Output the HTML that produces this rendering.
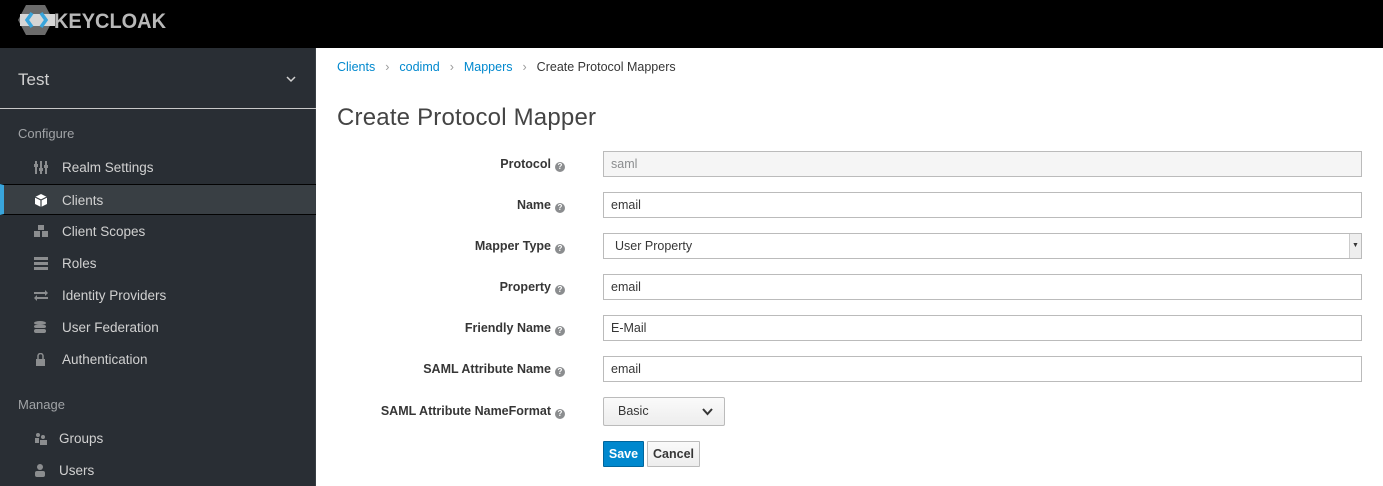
<!DOCTYPE html>
<html><head><style>
*{box-sizing:border-box;margin:0;padding:0}
body{width:1383px;height:486px;overflow:hidden;font-family:"Liberation Sans",sans-serif;background:#fff;position:relative;color:#363636}
.hdr{position:absolute;left:0;top:0;width:1383px;height:48px;background:#000}
.logo{position:absolute;left:18px;top:4px}
.side{position:absolute;left:0;top:48px;width:316px;height:438px;background:#292e34;border-right:1px solid #393f44}
.realm{position:absolute;left:18px;top:70px;color:#d1d1d1;font-size:17px}
.sep{position:absolute;left:0;top:108px;width:316px;height:1px;background:#c8c8c8}
.sec{position:absolute;left:18px;color:#a0a3a6;font-size:13px}
.item{position:absolute;left:0;width:316px;height:31px;color:#d1d1d1;font-size:13.5px;line-height:31px;padding-left:62px}
.item.act{background:#393f44;border-left:4px solid #39a5dc;padding-left:58px;border-top:1px solid #030303;border-bottom:1px solid #030303}
.ic{position:absolute;left:34px;top:9px;width:14px;height:13px}
.bc{position:absolute;left:337px;top:60px;font-size:12.5px;color:#363636}
.bc a{color:#0088ce}
.bc span.s{color:#9c9c9c;margin:0 10px}
h1{position:absolute;left:337px;top:104px;font-weight:normal;font-size:24px;color:#444;letter-spacing:0.2px}
.lbl{position:absolute;right:818px;font-size:12.5px;font-weight:bold;color:#363636;white-space:nowrap}
.q{display:inline-block;width:10px;height:10px;border-radius:50%;background:#8b8d8f;color:#fff;font-size:8px;line-height:10px;text-align:center;margin-left:4px;vertical-align:-1px}
.inp{position:absolute;left:603px;width:759px;height:26px;border:1px solid #bbb;font-size:12.5px;line-height:24px;padding-left:7px;color:#363636;background:#fff}
.sel{position:absolute;left:603px;top:397px;width:122px;height:29px;border:1px solid #bbb;border-radius:2px;background:linear-gradient(#fafafa,#ededed);font-size:12.5px;line-height:27px;padding-left:14px}
.btn{position:absolute;top:441px;height:26px;font-size:12.5px;line-height:24px;text-align:center;border-radius:1px}
</style></head><body>
<div class="hdr">
<svg class="logo" width="160" height="32" viewBox="0 0 160 32">
<polygon points="8,1 27,1 35,16 27,31 8,31 0,16" fill="#6b6b6b"/>
<polygon points="2,10 37,10 37,22 2,22" fill="#d6d6d6"/>
<path d="M14,9 L9,16 L14,23" stroke="#39a5dc" stroke-width="3.5" fill="none"/>
<path d="M23,9 L28,16 L23,23" stroke="#39a5dc" stroke-width="3.5" fill="none"/>
<text x="36" y="24" font-family="Liberation Sans" font-weight="bold" font-size="21" fill="#b8b8b8" textLength="112" lengthAdjust="spacingAndGlyphs">KEYCLOAK</text>
</svg>
</div>
<div class="side"></div>
<div class="realm">Test</div>
<svg style="position:absolute;left:286px;top:76px" width="10" height="7"><path d="M1,1 L5,5 L9,1" stroke="#d1d1d1" stroke-width="1.5" fill="none"/></svg>
<div class="sep"></div>
<div class="sec" style="top:126px">Configure</div>
<div class="item" style="top:152px"><svg class="ic" viewBox="0 0 14 13" fill="#8b8d8f"><rect x="1" y="0" width="2" height="13"/><rect x="6" y="0" width="2" height="13"/><rect x="11" y="0" width="2" height="13"/><rect x="0" y="3" width="4" height="3"/><rect x="5" y="7" width="4" height="3"/><rect x="10" y="4" width="4" height="3"/></svg>Realm Settings</div>
<div class="item act" style="top:184px"><svg class="ic" style="left:30px" viewBox="0 0 14 13"><path d="M7,0 L13,3 L13,10 L7,13 L1,10 L1,3Z" fill="#fff"/><path d="M1,3 L7,6 L13,3 M7,6 V13" stroke="#393f44" stroke-width="1.2" fill="none"/></svg>Clients</div>
<div class="item" style="top:216px"><svg class="ic" viewBox="0 0 14 13" fill="#8b8d8f"><rect x="4" y="0" width="6" height="5"/><rect x="0" y="6" width="6" height="6"/><rect x="8" y="6" width="6" height="6"/></svg>Client Scopes</div>
<div class="item" style="top:248px"><svg class="ic" viewBox="0 0 14 13" fill="#8b8d8f"><rect x="0" y="0" width="15" height="3"/><rect x="0" y="5" width="15" height="3"/><rect x="0" y="10" width="15" height="3"/></svg>Roles</div>
<div class="item" style="top:280px"><svg class="ic" viewBox="0 0 14 13" fill="#8b8d8f"><rect x="0" y="3" width="12" height="2"/><path d="M11,1 L14,4 L11,7Z"/><rect x="2" y="8" width="12" height="2"/><path d="M3,6 L0,9 L3,12Z"/></svg>Identity Providers</div>
<div class="item" style="top:312px"><svg class="ic" viewBox="0 0 14 13" fill="#8b8d8f"><ellipse cx="6" cy="2" rx="6" ry="2"/><rect x="0" y="4" width="12" height="3" rx="2"/><rect x="0" y="8" width="12" height="4" rx="2"/></svg>User Federation</div>
<div class="item" style="top:344px"><svg class="ic" viewBox="0 0 14 13" fill="#8b8d8f"><rect x="2" y="6" width="9" height="7"/><path d="M4,6 V3 a2.5,2.5 0 0 1 5,0 V6" stroke="#8b8d8f" stroke-width="1.5" fill="none"/></svg>Authentication</div>
<div class="sec" style="top:397px">Manage</div>
<div class="item" style="top:423px;padding-left:59px"><svg class="ic" viewBox="0 0 14 13" fill="#8b8d8f"><circle cx="4" cy="3" r="2"/><circle cx="9" cy="5" r="2"/><rect x="6" y="8" width="7" height="5"/><rect x="1" y="6" width="4" height="5"/></svg>Groups</div>
<div class="item" style="top:455px;padding-left:59px"><svg class="ic" viewBox="0 0 14 13" fill="#8b8d8f"><circle cx="6" cy="3" r="3"/><rect x="1" y="7" width="10" height="6" rx="2"/></svg>Users</div>

<div class="bc"><a>Clients</a><span class="s">›</span><a>codimd</a><span class="s">›</span><a>Mappers</a><span class="s">›</span>Create Protocol Mappers</div>
<h1>Create Protocol Mapper</h1>

<div class="lbl" style="top:157px">Protocol<span class="q">?</span></div>
<div class="inp" style="top:151px;background:#f5f5f5;color:#8b8d8f">saml</div>
<div class="lbl" style="top:198px">Name<span class="q">?</span></div>
<div class="inp" style="top:192px">email</div>
<div class="lbl" style="top:239px">Mapper Type<span class="q">?</span></div>
<div class="inp" style="top:233px;padding-left:11px">User Property<span style="position:absolute;right:0;top:0;width:12px;height:24px;background:#eee;border-left:1px solid #ccc;font-size:7px;text-align:center">▼</span></div>
<div class="lbl" style="top:280px">Property<span class="q">?</span></div>
<div class="inp" style="top:274px">email</div>
<div class="lbl" style="top:321px">Friendly Name<span class="q">?</span></div>
<div class="inp" style="top:315px">E-Mail</div>
<div class="lbl" style="top:362px">SAML Attribute Name<span class="q">?</span></div>
<div class="inp" style="top:356px">email</div>
<div class="lbl" style="top:404px">SAML Attribute NameFormat<span class="q">?</span></div>
<div class="sel">Basic<svg style="position:absolute;left:98px;top:10px" width="11" height="8"><path d="M1,1 L5.5,6 L10,1" stroke="#363636" stroke-width="2" fill="none"/></svg></div>
<div class="btn" style="left:603px;width:41px;background:#0088ce;border:1px solid #00659c;color:#fff;font-weight:bold">Save</div>
<div class="btn" style="left:647px;width:53px;background:linear-gradient(#fafafa,#ededed);border:1px solid #bbb;color:#363636;font-weight:bold">Cancel</div>
</body></html>
